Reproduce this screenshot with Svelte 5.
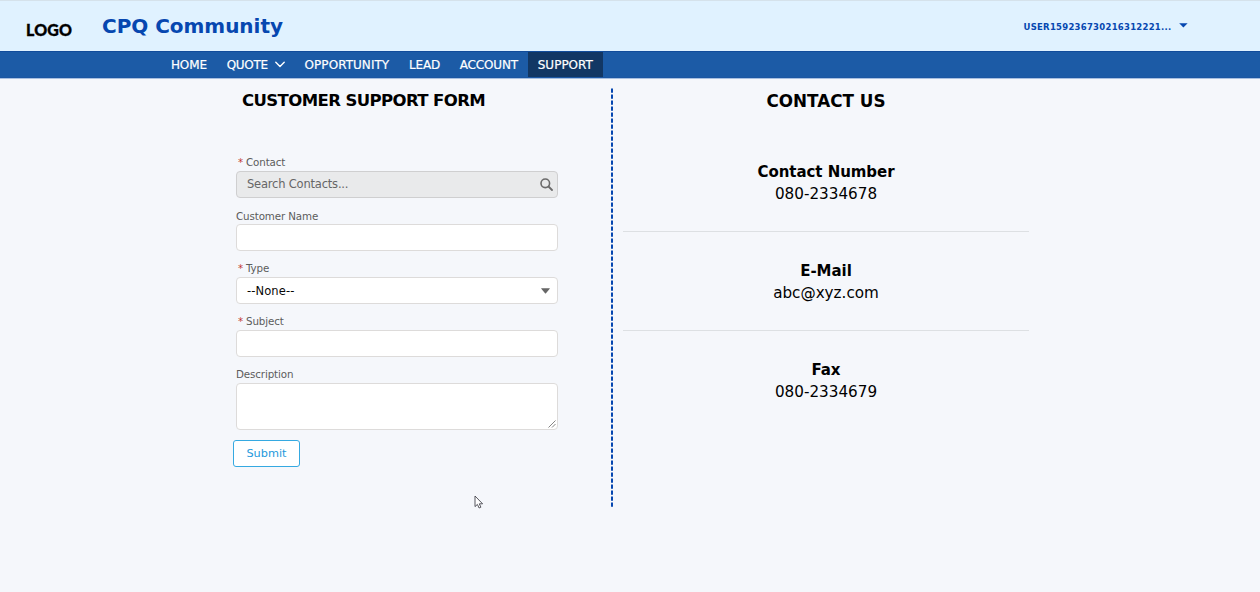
<script>
  const nav = [
    { name: 'HOME', spacing: -0.1 },
    { name: 'QUOTE', spacing: -0.3 },
    { name: 'OPPORTUNITY', spacing: 0.05 },
    { name: 'LEAD', spacing: -0.2 },
    { name: 'ACCOUNT', spacing: -0.15 },
    { name: 'SUPPORT', spacing: 0 }
  ];
  const contacts = [
    { title: 'Contact Number', value: '080-2334678' },
    { title: 'E-Mail', value: 'abc@xyz.com' },
    { title: 'Fax', value: '080-2334679' }
  ];
</script>

<div class="page">
  <header>
    <div class="logo">LOGO</div>
    <div class="brand">CPQ Community</div>
    <div class="user">
      <span>USER159236730216312221...</span>
      <svg width="9" height="5" viewBox="0 0 9 5"><path d="M0.2 0.2h8.4L4.4 4.6z" fill="#0647b0" /></svg>
    </div>
  </header>

  <nav>
    {#each nav as item}
      <a class:active={item.name === 'SUPPORT'} href="#{item.name.toLowerCase()}">
        <span style="letter-spacing: {item.spacing}px">{item.name}</span>
        {#if item.name === 'QUOTE'}
          <svg width="10" height="7" viewBox="0 0 10 7"><path d="M0.8 1.2L5 5.4L9.2 1.2" fill="none" stroke="#fff" stroke-width="1.4" stroke-linecap="round" stroke-linejoin="round" /></svg>
        {/if}
      </a>
    {/each}
  </nav>

  <main>
    <section class="form">
      <h2>CUSTOMER SUPPORT FORM</h2>
      <div class="fields">
        <div class="label req"><b>*</b>Contact</div>
        <div class="control lookup">
          <span>Search Contacts...</span>
          <svg width="13" height="13" viewBox="0 0 13 13" fill="none" stroke="#6b6b6b"><circle cx="5.3" cy="5.3" r="4.3" stroke-width="1.6" /><path d="M8.5 8.5L12 12" stroke-width="1.8" stroke-linecap="round" /></svg>
        </div>
        <div class="label plain">Customer Name</div>
        <div class="control"></div>
        <div class="label req"><b>*</b>Type</div>
        <div class="control select">
          <span>--None--</span>
          <svg width="9" height="6" viewBox="0 0 9 6"><path d="M0.4 0.3h8.2q.4 0 .1.5L5 5.3q-.5.5-1 0L.3.8Q0 .3.4.3z" fill="#666" /></svg>
        </div>
        <div class="label req"><b>*</b>Subject</div>
        <div class="control"></div>
        <div class="label">Description</div>
        <div class="control area">
          <svg width="8" height="8" viewBox="0 0 8 8"><path d="M0.5 7.5L7.5 0.5M4 7.5L7.5 4" stroke="#777" stroke-width="0.9" /></svg>
        </div>
      </div>
      <button>Submit</button>
    </section>

    <svg class="divider" width="2" height="419" viewBox="0 0 2 419"><path d="M1 0.5V419" stroke="#0647b0" stroke-width="2" stroke-dasharray="4.2 1.8" /></svg>

    <section class="contact">
      <h2>CONTACT US</h2>
      {#each contacts as c}
        <div class="entry">
          <strong>{c.title}</strong>
          <span>{c.value}</span>
        </div>
      {/each}
    </section>
  </main>

  <svg class="cursor" width="10" height="14" viewBox="0 0 10 14"><path d="M1 1V11.6L3.4 9.4L5.1 13L6.9 12.2L5.3 8.8H8.6z" fill="#fff" stroke="#44444c" stroke-width="0.9" stroke-linejoin="round" /></svg>
</div>

<style>
  :global(body) { background: #f5f7fb; }
  .page { position: relative; box-sizing: border-box; height: 592px; overflow: hidden; background: #f5f7fb; color: #000; font-family: 'DejaVu Sans', Verdana, sans-serif; }
  header { box-sizing: border-box; height: 51px; display: flex; align-items: flex-start; background: #e0f2ff; border-top: 1px solid #d5e2eb; }
  .logo { width: 76px; padding: 18px 0 0 26px; font: 900 16px/22px Lato, sans-serif; letter-spacing: 0.15px; -webkit-text-stroke: 0.3px #000; }
  .brand { padding-top: 13px; font-size: 20px; line-height: 24px; font-weight: 700; letter-spacing: -0.03px; color: #0647b0; white-space: nowrap; }
  .user { display: flex; margin: 19px 72px 0 auto; gap: 7.5px; font-size: 8.5px; letter-spacing: 0.26px; line-height: 14px; font-weight: 700; color: #0647b0; }
  .user svg { margin-top: 3px; }
  nav { box-sizing: border-box; height: 27px; display: flex; padding-left: 161px; background: #1c5ba6; border-top: 1px solid #114c9b; border-bottom: 1px solid #1c57a3; box-shadow: 0 1px 0 #a8c0e0; }
  nav a { display: flex; align-items: center; gap: 7px; padding: 0 9.9px; color: #fff; text-decoration: none; font-size: 12px; line-height: 26px; -webkit-text-stroke: 0.2px #fff; }
  nav .active { background: #123764; }
  main { display: flex; padding-top: 10px; }
  h2 { margin: 0; font-size: 16.5px; line-height: 26px; font-weight: 700; }
  .form { width: 611px; }
  .form h2 { padding-left: 242px; letter-spacing: -0.6px; }
  .fields { margin: 39px 0 0 236px; width: 322px; display: grid; grid-template-rows: 18px 35px 18px 35px 18px 35px 18px 35px 18px 47px; font-size: 11.5px; letter-spacing: -0.2px; }
  .label { font-size: 10.3px; line-height: 18px; letter-spacing: -0.12px; color: #5c5c5c; }
  .plain { line-height: 20px; }
  .req { padding-left: 2px; }
  .req b { margin-right: 3px; font-weight: 400; color: #c23934; }
  .control { box-sizing: border-box; height: 27px; display: flex; align-items: center; justify-content: space-between; padding: 0 4px 0 10px; background: #fff; border: 1px solid #dddbda; border-radius: 4px; color: #080707; }
  .lookup { background: #e9eaeb; border-color: #cfcfd0; color: #666; line-height: 15px; }
  .select { padding-right: 7px; letter-spacing: 0.1px; }
  .area { height: 47px; align-items: flex-end; justify-content: flex-end; padding: 0 1px 1px; }
  button { display: block; margin: 10px 0 0 233px; width: 67px; height: 27px; box-sizing: border-box; padding: 0; border: 1px solid #35a9e1; border-radius: 3px; background: #fff; color: #2499dc; font: 11.3px 'DejaVu Sans', sans-serif; }
  .divider { flex: none; }
  .contact { width: 406px; margin-left: 10px; text-align: center; }
  .contact h2 { font-size: 16.8px; }
  .entry { box-sizing: border-box; height: 99px; padding-top: 28px; border-bottom: 1px solid #dde0e3; font-size: 15.2px; line-height: 22px; }
  .entry strong { font-size: 15px; letter-spacing: -0.05px; }
  .contact h2 + .entry { margin-top: 19px; }
  .entry:last-child { border-bottom: 0; }
  .entry strong, .entry span { display: block; }
  .cursor { position: absolute; left: 474px; top: 495px; }
</style>
